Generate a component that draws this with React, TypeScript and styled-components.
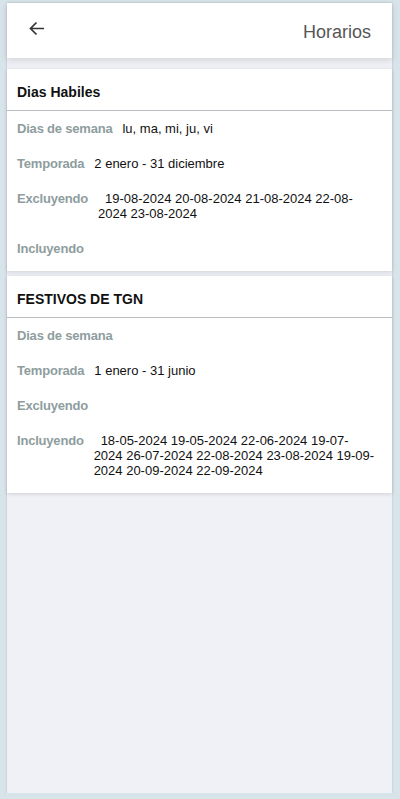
import styled, { createGlobalStyle } from 'styled-components'

const GlobalStyle = createGlobalStyle`
  html, body {
    margin: 0;
    padding: 0;
    background: #d7e4ea;
    font-family: "Liberation Sans", Arial, Helvetica, sans-serif;
  }
`;

const Frame = styled.div`
  margin: 3px 8px 0 7px;
  height: 790px;
  background: #f0f1f6;
  box-shadow: 0 0 2px rgba(0, 0, 0, 0.18);
  display: flex;
  flex-direction: column;
`;

const Header = styled.div`
  height: 55px;
  background: #fff;
  display: flex;
  align-items: center;
  justify-content: space-between;
  padding: 0 21px 0 22px;
  box-shadow: 0 2px 7px rgba(0, 0, 0, 0.13);
  position: relative;
  z-index: 1;
`;

const BackButton = styled.button`
  border: none;
  background: none;
  padding: 0;
  margin-top: -4px;
  width: 16px;
  height: 16px;
  cursor: pointer;
  svg {
    display: block;
  }
`;

const Title = styled.div`
  font-size: 18px;
  color: #565656;
  margin-top: 4px;
`;

const List = styled.div`
  display: flex;
  flex-direction: column;
  gap: 5px;
  padding-top: 11px;
`;

const Card = styled.div`
  background: #fff;
  box-shadow: 0 1px 4px rgba(0, 0, 0, 0.14);
`;

const CardTitle = styled.div`
  padding: 15px 10px 9px;
  line-height: 17px;
  font-size: 14px;
  font-weight: bold;
  color: #111;
  border-bottom: 1px solid #b9bdc1;
`;

const CardBody = styled.div`
  padding-bottom: 5px;
`;

const Row = styled.div`
  display: flex;
  gap: 10px;
  padding: 10px 16px 10px 10px;
  line-height: 15px;
  font-size: 13px;
`;

const Label = styled.span`
  flex-shrink: 0;
  font-weight: bold;
  letter-spacing: -0.2px;
  color: #8e9d9e;
`;

const Value = styled.span<{ $indent?: boolean }>`
  flex: 1;
  min-width: 0;
  color: #111;
  text-indent: ${(p) => (p.$indent ? '7px' : '0')};
`;

type Schedule = {
  name: string;
  weekdays: string;
  season: string;
  excluding: string[];
  including: string[];
};

const schedules: Schedule[] = [
  {
    name: 'Dias Habiles',
    weekdays: 'lu, ma, mi, ju, vi',
    season: '2 enero - 31 diciembre',
    excluding: ['19-08-2024', '20-08-2024', '21-08-2024', '22-08-2024', '23-08-2024'],
    including: [],
  },
  {
    name: 'FESTIVOS DE TGN',
    weekdays: '',
    season: '1 enero - 31 junio',
    excluding: [],
    including: [
      '18-05-2024', '19-05-2024', '22-06-2024', '19-07-2024', '26-07-2024',
      '22-08-2024', '23-08-2024', '19-09-2024', '20-09-2024', '22-09-2024',
    ],
  },
];

// break points after hyphens, like the original list wraps
const dateList = (dates: string[]) =>
  dates.map((d) => d.replace(/-/g, '-\u200b')).join(' ');

const App = () => {
  return (
    <>
      <GlobalStyle />
      <Frame>
        <Header>
          <BackButton>
            <svg width="16" height="16" viewBox="0 0 16 16" fill="none">
              <path d="M15 7.5H1.5M7.5 1.5L1.5 7.5L7.5 13.5" stroke="#333" strokeWidth="1.7" />
            </svg>
          </BackButton>
          <Title>Horarios</Title>
        </Header>
        <List>
          {schedules.map((s) => (
            <Card key={s.name}>
              <CardTitle>{s.name}</CardTitle>
              <CardBody>
                <Row>
                  <Label>Dias de semana</Label>
                  <Value>{s.weekdays}</Value>
                </Row>
                <Row>
                  <Label>Temporada</Label>
                  <Value>{s.season}</Value>
                </Row>
                <Row>
                  <Label>Excluyendo</Label>
                  <Value $indent={s.excluding.length > 0}>{dateList(s.excluding)}</Value>
                </Row>
                <Row>
                  <Label>Incluyendo</Label>
                  <Value $indent={s.including.length > 0}>{dateList(s.including)}</Value>
                </Row>
              </CardBody>
            </Card>
          ))}
        </List>
      </Frame>
    </>
  )
}

export default App
